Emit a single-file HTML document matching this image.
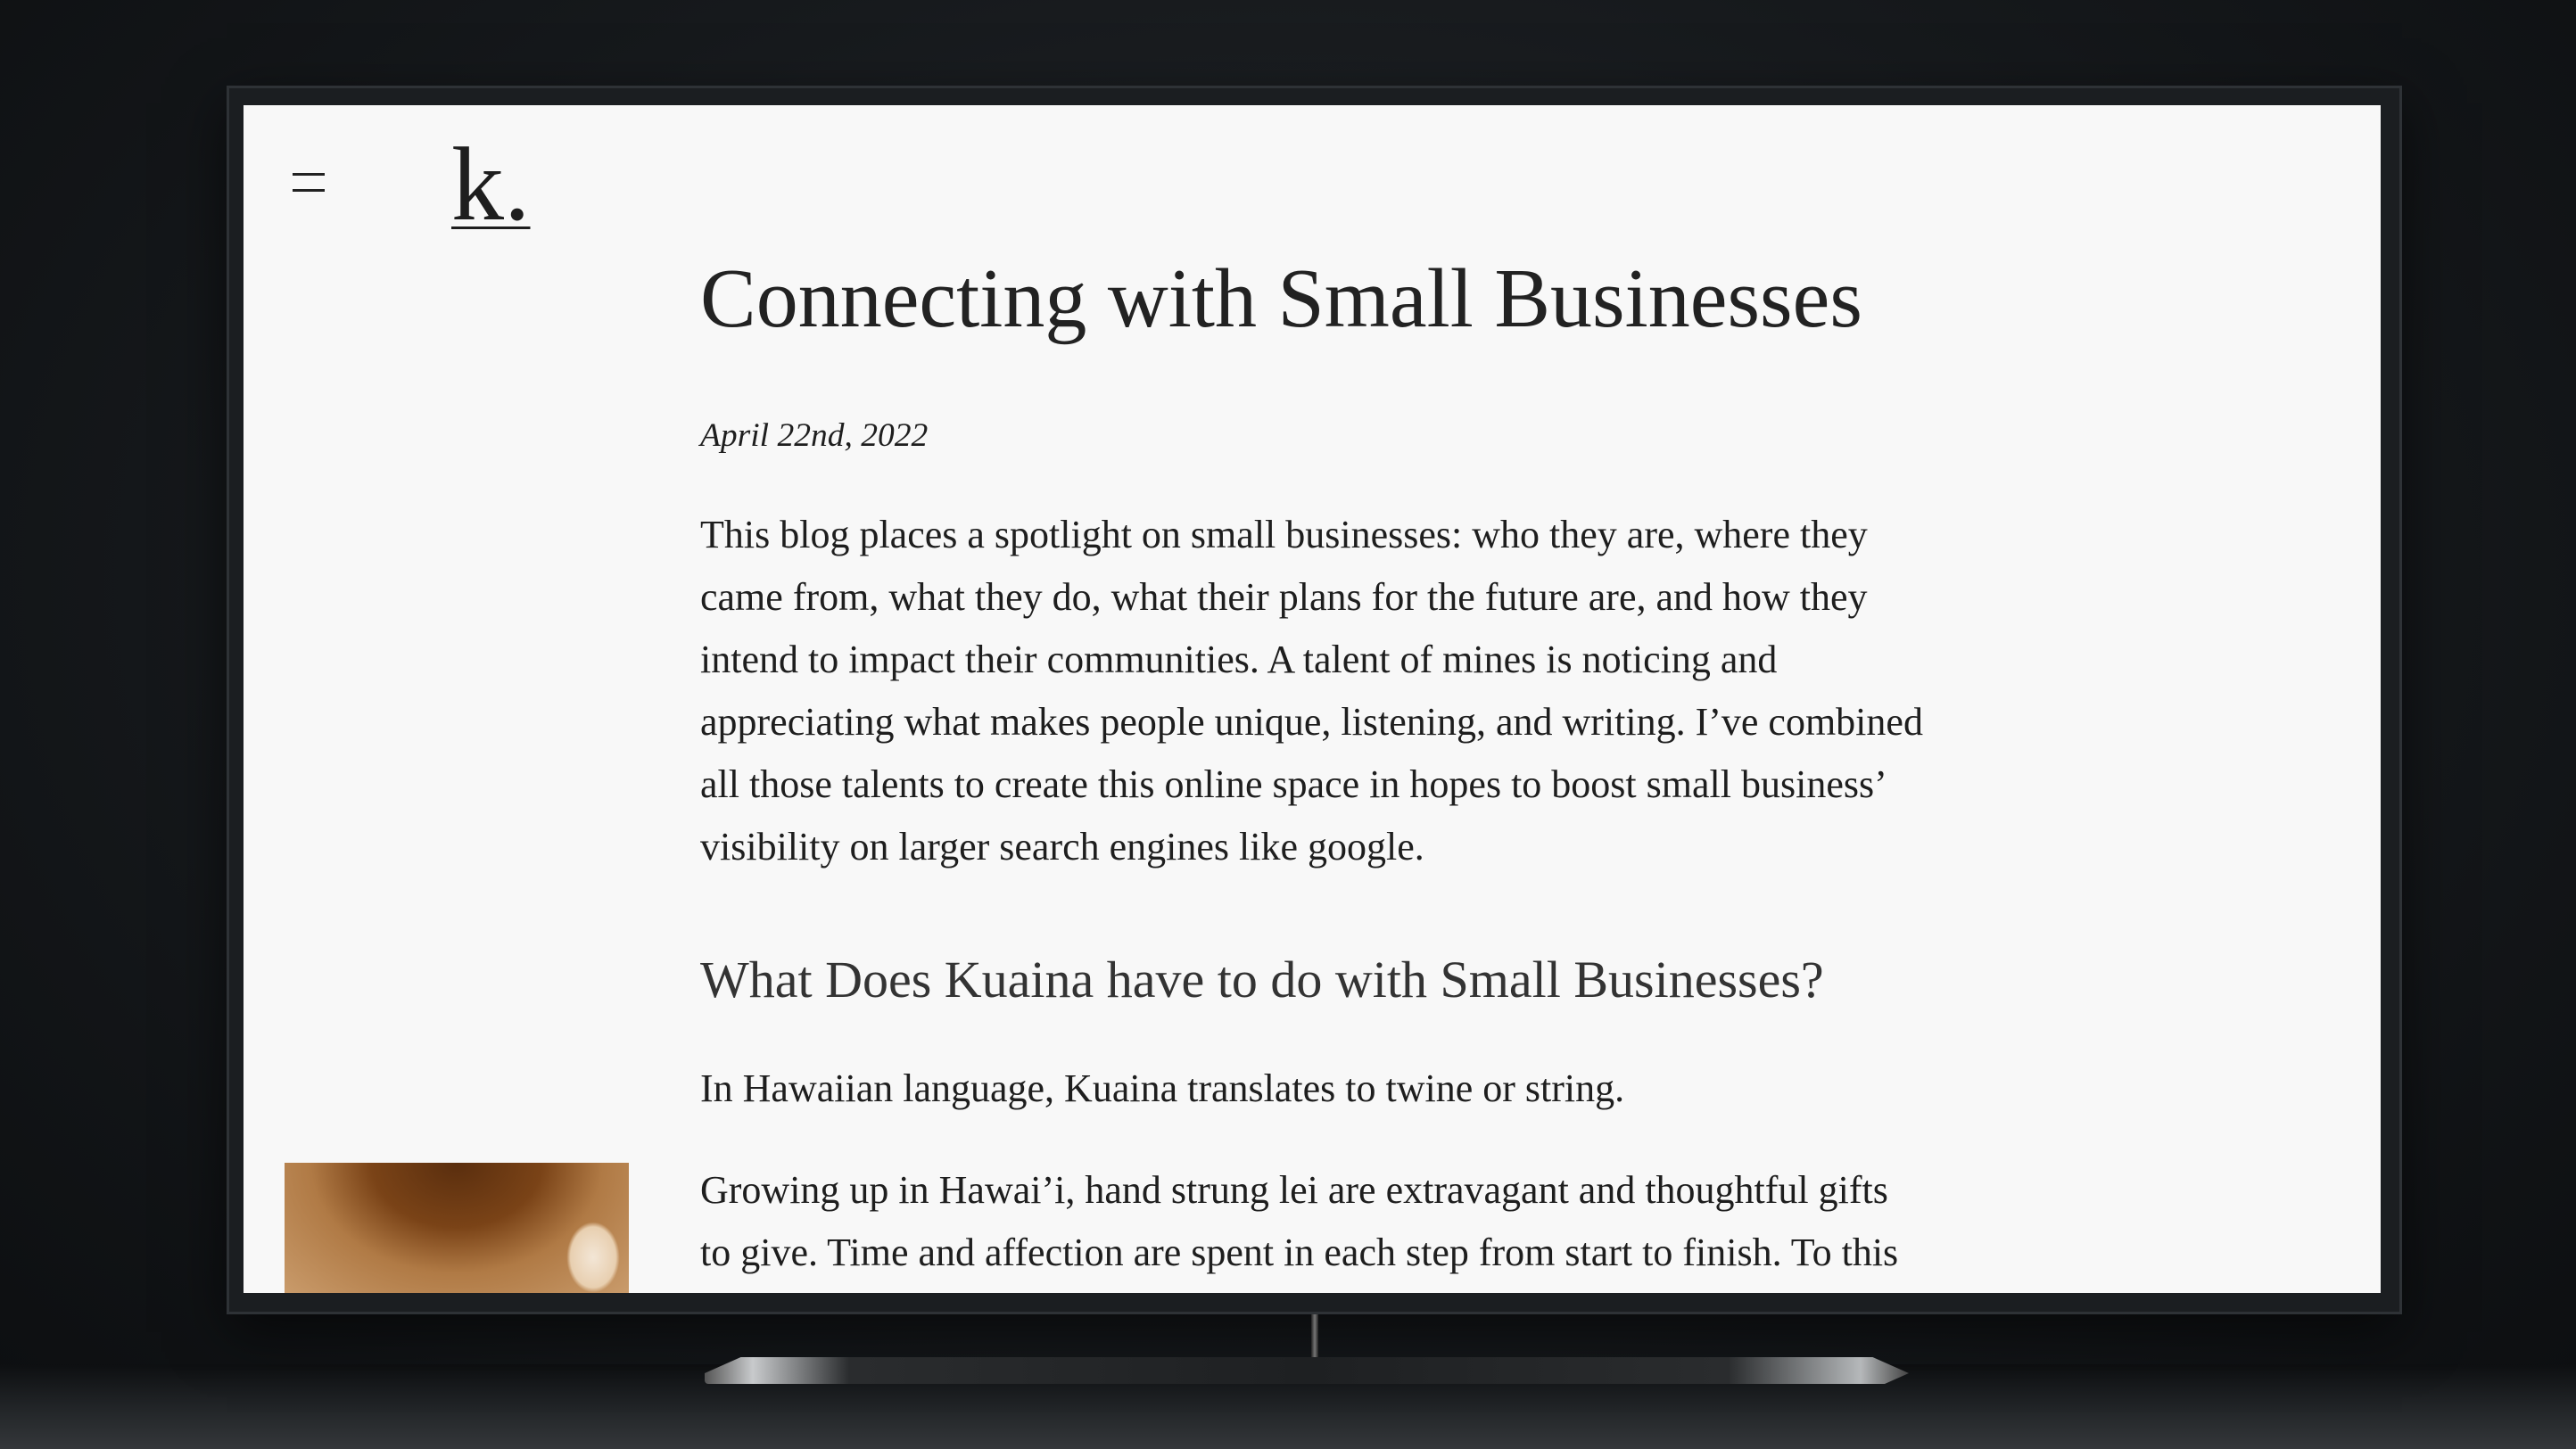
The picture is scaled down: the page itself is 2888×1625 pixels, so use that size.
<!DOCTYPE html>
<html><head><meta charset="utf-8"><style>
*{margin:0;padding:0;box-sizing:border-box}
html,body{width:2888px;height:1625px;overflow:hidden}
body{position:relative;background:radial-gradient(ellipse at 50% 40%,#24282c 0%,#16191c 55%,#0c0e10 100%);font-family:"Liberation Serif",serif;color:#1e1e1e}
.floor{position:absolute;left:0;top:1530px;width:2888px;height:95px;background:linear-gradient(#0d0f11,#25282b 60%,#34373a)}
.bezel{position:absolute;left:254px;top:96px;width:2439px;height:1378px;background:#1b1e21;border:3px solid #2e3236;box-shadow:0 20px 60px rgba(0,0,0,.6)}
.screen{position:absolute;left:273px;top:118px;width:2396px;height:1332px;background:#f8f8f8;overflow:hidden}
.t{position:absolute;white-space:nowrap;line-height:1}
.neck{position:absolute;left:1470px;top:1474px;width:8px;height:56px;background:linear-gradient(90deg,#222,#777,#222)}
.base{position:absolute;left:790px;top:1522px;width:1350px;height:30px;background:linear-gradient(90deg,#555,#c8cacc 4%,#2a2c2e 12%,#1e2022 50%,#2a2c2e 85%,#b5b8ba 96%,#444);clip-path:polygon(3% 0,97% 0,100% 60%,98% 100%,0 100%,0 60%);border-radius:4px}
.img{position:absolute;left:46px;top:1186px;width:386px;height:146px;background:radial-gradient(ellipse at 50% 0%,#5a2e0e 0%,#7a4317 35%,#b07a45 60%,#c99b6b 100%)}
.img:after{content:"";position:absolute;right:10px;bottom:0;width:60px;height:80px;background:radial-gradient(ellipse,#f3e6d6,#e8cfb0 60%,transparent 70%)}
</style></head><body>
<div class="floor"></div>
<div class="bezel"></div>
<div class="neck"></div>
<div class="base"></div>
<div class="screen">
  <div style="position:absolute;left:55px;top:76px;width:36px;height:3px;background:#222"></div>
  <div style="position:absolute;left:55px;top:94px;width:36px;height:3px;background:#222"></div>
  <div class="t" style="left:233px;top:30px;font-size:118px;text-decoration:underline;text-decoration-thickness:3px;text-underline-offset:8px">k.</div>
  <div class="t" style="left:512px;top:170px;font-size:94px;color:#222">Connecting with Small Businesses</div>
  <div class="t" style="left:512px;top:352px;font-size:37.5px;font-style:italic">April 22nd, 2022</div>
  <div style="position:absolute;left:512px;top:447px;font-size:44px;line-height:70px;white-space:nowrap">
    This blog places a spotlight on small businesses: who they are, where they<br>
    came from, what they do, what their plans for the future are, and how they<br>
    intend to impact their communities. A talent of mines is noticing and<br>
    appreciating what makes people unique, listening, and writing. I’ve combined<br>
    all those talents to create this online space in hopes to boost small business’<br>
    visibility on larger search engines like google.
  </div>
  <div class="t" style="left:512px;top:952px;font-size:58px;color:#333">What Does Kuaina have to do with Small Businesses?</div>
  <div class="t" style="left:512px;top:1081px;font-size:44px">In Hawaiian language, Kuaina translates to twine or string.</div>
  <div style="position:absolute;left:512px;top:1182px;font-size:44px;line-height:70px;white-space:nowrap">
    Growing up in Hawai’i, hand strung lei are extravagant and thoughtful gifts<br>
    to give. Time and affection are spent in each step from start to finish. To this
  </div>
  <div class="img"></div>
</div>
</body></html>
